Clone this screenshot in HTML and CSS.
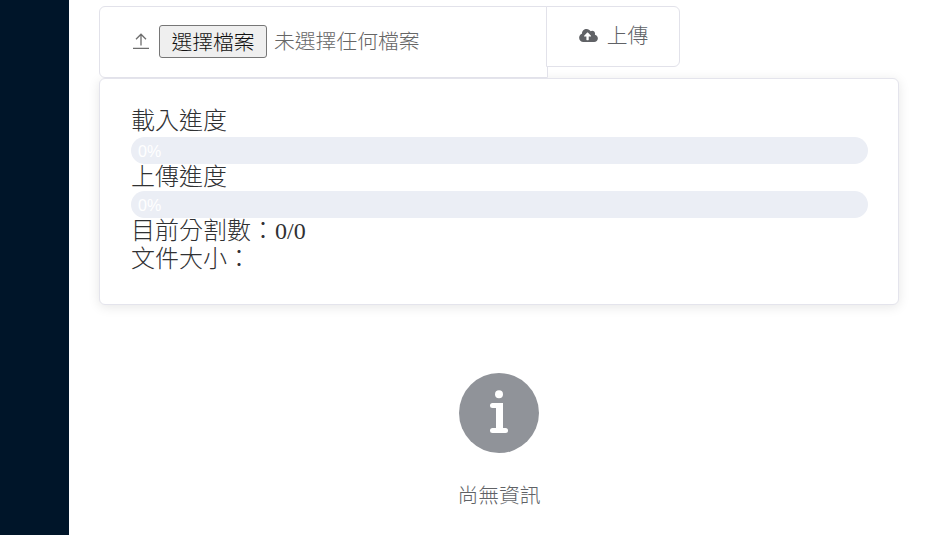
FILE: index.html
```html
<!DOCTYPE html>
<html lang="zh-Hant">
<head>
<meta charset="utf-8">
<title>上傳</title>
<link rel="stylesheet" href="styles.css">
</head>
<body>
<div class="app">
  <aside class="sidebar"></aside>
  <main class="main">
    <div class="upload-row">
      <div class="file-box">
        <svg class="up-icon" viewBox="0 0 16 16" width="16" height="16" fill="none" stroke="#6e6e6e" stroke-width="1.3"><path d="M0 15.4h16M8 12.5V1.2M3 6.2l5-5 5 5"/></svg>
        <button class="file-btn" type="button">選擇檔案</button>
        <span class="file-name">未選擇任何檔案</span>
      </div>
      <button class="upload-btn" type="button">
        <svg class="cloud-icon" viewBox="0 0 640 512" width="19" height="15" fill="#606266"><path d="M537.6 226.6c4.1-10.7 6.4-22.4 6.4-34.6 0-53-43-96-96-96-19.7 0-38.1 6-53.3 16.2C367 64.2 315.3 32 256 32c-88.4 0-160 71.6-160 160 0 2.7.1 5.4.2 8.1C40.2 219.8 0 273.2 0 336c0 79.5 64.5 144 144 144h368c70.7 0 128-57.3 128-128 0-61.9-44-113.6-102.4-125.4zM393.4 288H328v112c0 8.8-7.2 16-16 16h-48c-8.8 0-16-7.2-16-16V288h-65.4c-14.3 0-21.4-17.2-11.3-27.3l105.4-105.4c6.2-6.2 16.4-6.2 22.6 0l105.4 105.4c10.1 10.1 2.9 27.3-11.3 27.3z"/></svg>
        <span>上傳</span>
      </button>
    </div>
    <section class="card">
      <div class="line line-first">載入進度</div>
      <div class="bar"><span class="bar-text">0%</span></div>
      <div class="line">上傳進度</div>
      <div class="bar"><span class="bar-text">0%</span></div>
      <div class="line">目前分割數：0/0</div>
      <div class="line line-last">文件大小：</div>
    </section>
    <div class="empty">
      <svg class="info-icon" viewBox="0 0 80 80" width="80" height="80" fill="#fff">
        <circle cx="40" cy="40" r="40" fill="#909399"/>
        <circle cx="40" cy="21.3" r="4"/>
        <rect x="31" y="30" width="13" height="5" rx="2.5"/>
        <rect x="37" y="30" width="7" height="28"/>
        <rect x="31" y="55" width="18" height="5" rx="2.5"/>
      </svg>
      <p class="empty-text">尚無資訊</p>
    </div>
  </main>
</div>
</body>
</html>
```
FILE: styles.css
```css
* { box-sizing: border-box; }
html, body { margin: 0; height: 100%; overflow: hidden; background: #fff; }
body { font-family: "Liberation Serif", "Noto Sans CJK TC", serif; color: #303133; }
.app { display: flex; height: 535px; }
.sidebar { width: 69px; flex: none; background: #001529; }
.main { flex: 1; padding: 6px 29px 0 30px; min-width: 0; }
.upload-row { display: flex; align-items: flex-start; }
.file-box {
  width: 449px; height: 72px; display: flex; align-items: center;
  padding: 0 0 2px 33px; border: 1px solid #e2e2ea; border-radius: 6px 0 0 6px;
  background: #fff; font-family: "Liberation Sans", "Noto Sans CJK TC", sans-serif; font-size: 20.8px; font-weight: 300;
}
.up-icon { flex: none; margin-right: 10px; }
.file-btn {
  height: 33px; width: 108px; padding: 0 0 2px; border: 1px solid #767676; border-radius: 3px;
  background: #efefef; color: #111; font: inherit; margin-right: 7px;
}
.file-name { color: #666; position: relative; top: -1px; }
.upload-btn {
  width: 134px; height: 61px; margin-left: -2px; position: relative; display: flex; align-items: center;
  justify-content: center; gap: 10px; padding: 0 0 5px; border: 1px solid #e2e2ea; border-radius: 0 6px 6px 0;
  background: #fff; color: #606266; font-family: "Liberation Sans", "Noto Sans CJK TC", sans-serif; font-size: 20.8px; font-weight: 300;
}
.cloud-icon { position: relative; top: 1px; left: 1px; }
.card {
  width: 800px; height: 227px; padding: 31px 30px 31px 31px; border: 1px solid #e4e4ec; border-radius: 6px;
  background: #fff; box-shadow: 0 2px 12px rgba(0, 0, 0, .1); font-size: 24px; font-weight: 300; color: #303133;
}
.line { height: 27px; line-height: 27px; white-space: nowrap; }
.line-first { line-height: 23px; }
.line-last { line-height: 29px; }
.bar { height: 27px; border-radius: 14px; background: #ebeef5; padding-left: 7px; }
.bar-text { display: block; color: #fff; font-family: "Liberation Sans", sans-serif; font-size: 16px; line-height: 27px; padding-top: 1px; }
.empty { display: flex; flex-direction: column; align-items: center; margin-top: 68px; }
.info-icon { display: block; }
.empty-text { margin: 29px 0 0; color: #606266; font-size: 20.8px; font-weight: 300; line-height: 28px; font-family: "Liberation Sans", "Noto Sans CJK TC", sans-serif; }
```
